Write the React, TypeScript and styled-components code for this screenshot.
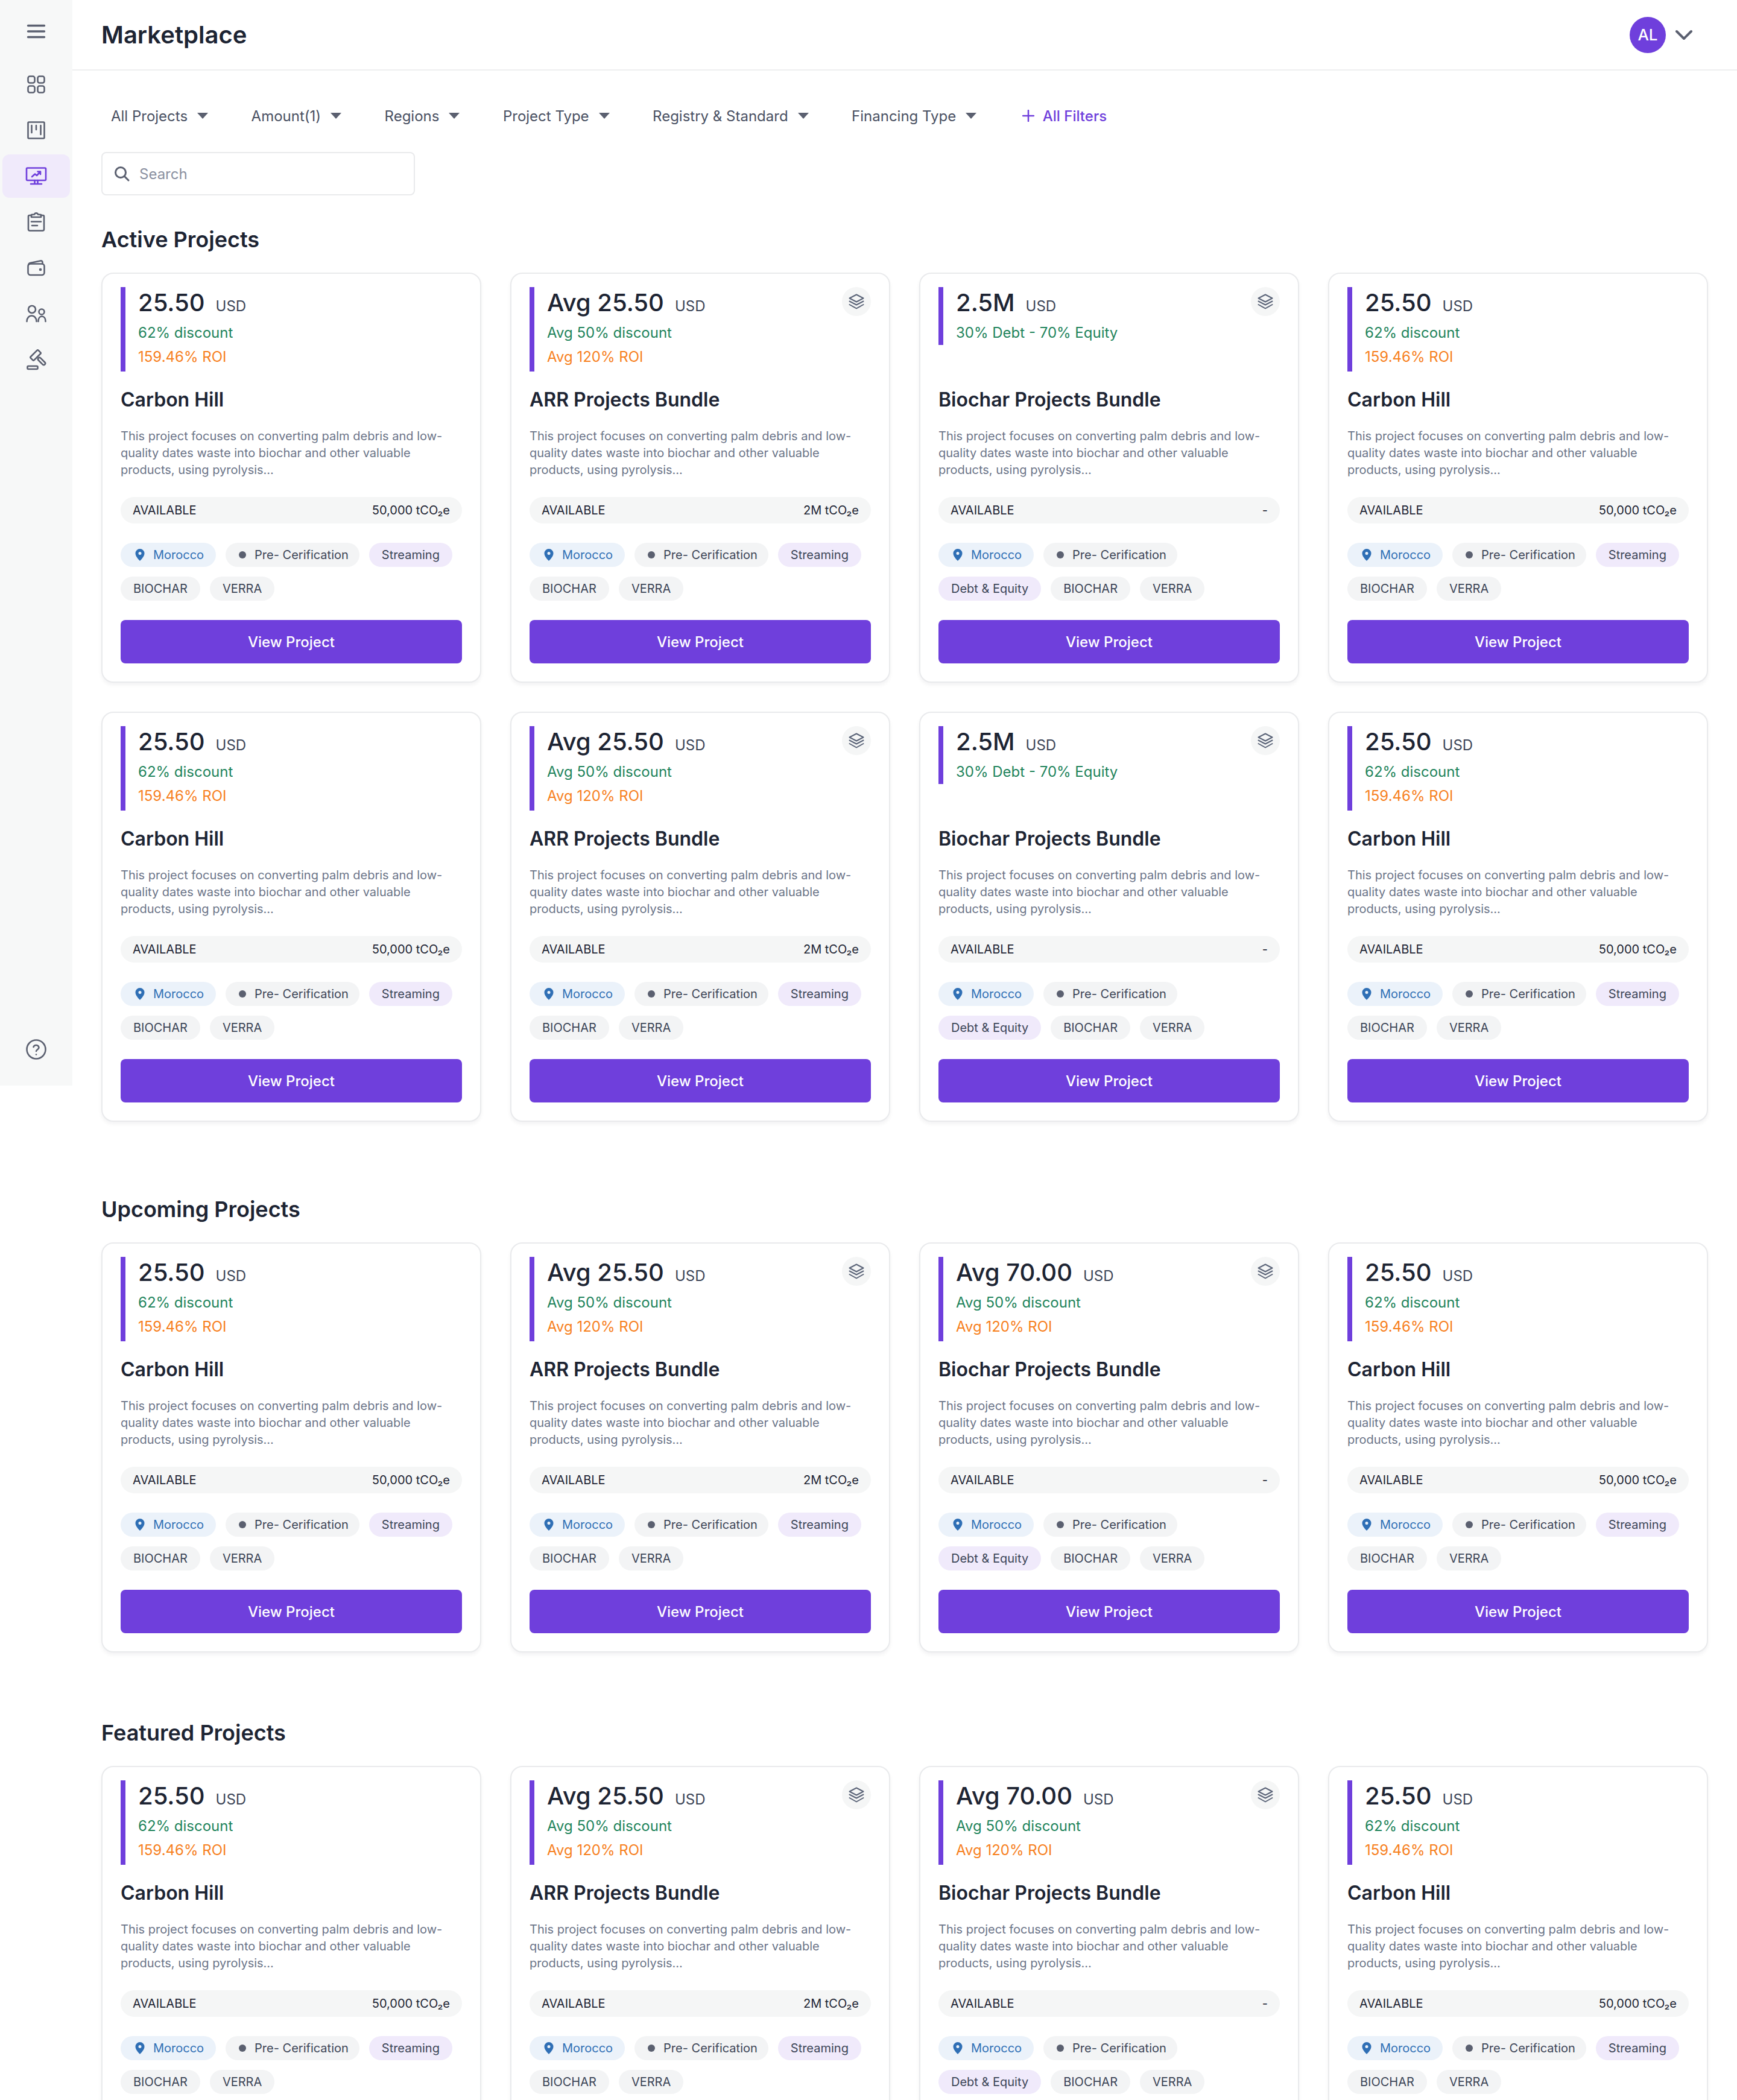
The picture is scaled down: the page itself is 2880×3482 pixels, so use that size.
import styled, { createGlobalStyle } from "styled-components";

const GlobalStyle = createGlobalStyle`
  html, body {
    margin: 0;
    padding: 0;
    background: #fff;
    font-family: Inter, "Noto Sans", sans-serif;
    color: #1d2433;
  }
  #root {
    height: 3482px;
    overflow: hidden;
  }
`;

const Page = styled.div`
  display: flex;
  align-items: flex-start;
  width: 2880px;
`;

const Sidebar = styled.nav`
  display: flex;
  flex-direction: column;
  flex: none;
  box-sizing: border-box;
  width: 120px;
  height: 1800px;
  padding: 0 4px 36px;
  background: #f7f8f8;
  color: #5b6070;
`;

const MenuButton = styled.div`
  display: flex;
  align-items: center;
  justify-content: center;
  height: 104px;
`;

const NavList = styled.div`
  display: flex;
  flex-direction: column;
  gap: 4px;
`;

const NavItem = styled.div<{ $active?: boolean }>`
  display: flex;
  align-items: center;
  justify-content: center;
  height: 72px;
  border-radius: 12px;
  background: ${(p) => (p.$active ? "#f0eafb" : "transparent")};
  color: ${(p) => (p.$active ? "#6f3fdc" : "#5b6070")};
`;

const HelpButton = styled.div`
  display: flex;
  align-items: center;
  justify-content: center;
  margin-top: auto;
`;

const Main = styled.main`
  flex: 1;
  min-width: 0;
`;

const Header = styled.header`
  display: flex;
  align-items: center;
  justify-content: space-between;
  box-sizing: border-box;
  height: 117px;
  padding: 0 72px 0 48px;
  border-bottom: 2px solid #eeeff0;
`;

const PageTitle = styled.h1`
  margin: 0;
  font-size: 40px;
  font-weight: 600;
  color: #1d2433;
`;

const UserMenu = styled.div`
  display: flex;
  align-items: center;
  gap: 14px;
  color: #5b6070;
`;

const Avatar = styled.div`
  display: flex;
  align-items: center;
  justify-content: center;
  width: 60px;
  height: 60px;
  border-radius: 50%;
  background: #6f3fdc;
  color: #fff;
  font-size: 26px;
  font-weight: 500;
`;

const Content = styled.div`
  padding: 0 48px;
`;

const Filters = styled.div`
  display: flex;
  align-items: center;
  gap: 71.5px;
  height: 48px;
  margin-top: 51px;
  padding-left: 16px;
`;

const Filter = styled.div`
  display: flex;
  align-items: center;
  gap: 16px;
  font-size: 24px;
  color: #4a5163;
  white-space: nowrap;
`;

const Caret = styled.span`
  width: 0;
  height: 0;
  border-left: 9px solid transparent;
  border-right: 9px solid transparent;
  border-top: 10px solid #5b6070;
`;

const AllFilters = styled.div`
  display: flex;
  align-items: center;
  gap: 14px;
  margin-left: 4px;
  font-size: 24px;
  font-weight: 500;
  color: #6f3fdc;
`;

const Search = styled.div`
  display: flex;
  align-items: center;
  gap: 15px;
  box-sizing: border-box;
  width: 520px;
  height: 72px;
  margin-top: 36px;
  padding: 0 18px;
  border: 2px solid #e9eaec;
  border-radius: 8px;
  color: #5b6070;
  font-size: 24px;
`;

const SearchHint = styled.span`
  color: #8a90a0;
`;

const Section = styled.section<{ $top: number }>`
  margin-top: ${(p) => p.$top}px;
`;

const SectionTitle = styled.h2`
  margin: 0 0 31px;
  font-size: 36px;
  line-height: 48px;
  font-weight: 600;
  color: #1d2433;
`;

const CardGrid = styled.div`
  display: grid;
  grid-template-columns: repeat(4, 630px);
  gap: 48px;
`;

const Card = styled.article`
  position: relative;
  box-sizing: border-box;
  height: 680px;
  padding: 22px 30px 30px;
  border: 2px solid #e9eaec;
  border-radius: 20px;
  background: #fff;
  box-shadow: 0 4px 6px rgba(16, 24, 40, 0.05);
`;

const PriceArea = styled.div`
  height: 140px;
`;

const PriceBar = styled.div`
  border-left: 8px solid #6f3fdc;
  padding-left: 21px;
`;

const PriceRow = styled.div`
  display: flex;
  align-items: baseline;
  gap: 18px;
  height: 56px;
  line-height: 52px;
`;

const Price = styled.span`
  font-size: 40px;
  font-weight: 500;
  color: #1d2433;
`;

const Currency = styled.span`
  font-size: 24px;
  color: #3c4557;
`;

const Discount = styled.div`
  font-size: 24px;
  line-height: 40px;
  color: #22845c;
`;

const Roi = styled.div`
  padding-bottom: 4px;
  font-size: 24px;
  line-height: 40px;
  color: #f7801e;
`;

const BundleBadge = styled.div`
  position: absolute;
  top: 22px;
  right: 30px;
  display: flex;
  align-items: center;
  justify-content: center;
  width: 48px;
  height: 48px;
  border-radius: 50%;
  background: #f5f6f6;
  color: #5b6478;
`;

const CardTitle = styled.h3`
  margin: 25px 0 0;
  font-size: 32px;
  line-height: 44px;
  font-weight: 600;
  color: #1d2433;
`;

const Description = styled.p`
  margin: 24px 0 0;
  font-size: 20px;
  line-height: 28px;
  color: #6b7488;
`;

const Availability = styled.div`
  display: flex;
  align-items: center;
  justify-content: space-between;
  height: 44px;
  margin-top: 31px;
  padding: 0 20px;
  border-radius: 22px;
  background: #f5f6f6;
  font-size: 20px;
  color: #1d2433;
`;

const TagList = styled.div`
  display: flex;
  flex-wrap: wrap;
  gap: 16px;
  height: 96px;
  margin-top: 32px;
`;

const Tag = styled.span<{ $tone?: "blue" | "purple" | "grey" }>`
  display: inline-flex;
  align-items: center;
  gap: 14px;
  box-sizing: border-box;
  height: 40px;
  padding: 0 21px;
  border-radius: 20px;
  font-size: 20px;
  white-space: nowrap;
  background: ${(p) =>
    p.$tone === "blue" ? "#ebf2fa" : p.$tone === "purple" ? "#f0eafb" : "#f3f4f5"};
  color: ${(p) => (p.$tone === "blue" ? "#2f6fb5" : "#3c4557")};
`;

const LocationTag = styled(Tag)`
  padding: 0 20px 0 24px;
`;

const StatusTag = styled(Tag)`
  padding: 0 18px 0 22px;
`;

const Dot = styled.span`
  width: 12px;
  height: 12px;
  border-radius: 50%;
  background: #5b6070;
`;

const ViewButton = styled.button`
  display: block;
  width: 100%;
  height: 72px;
  margin-top: 32px;
  border: none;
  border-radius: 8px;
  background: #6f3fdc;
  color: #fff;
  font-family: inherit;
  font-size: 24px;
  font-weight: 500;
`;

const NavIcon = ({ children }: { children: React.ReactNode }) => (
  <svg
    width="48"
    height="48"
    viewBox="0 0 48 48"
    fill="none"
    stroke="currentColor"
    strokeWidth="2.6"
    strokeLinecap="round"
    strokeLinejoin="round"
  >
    {children}
  </svg>
);

const navIcons = [
  <>
    <rect x="10.5" y="10.5" width="11" height="11" rx="3" />
    <rect x="26.5" y="10.5" width="11" height="11" rx="3" />
    <rect x="10.5" y="26.5" width="11" height="11" rx="3" />
    <rect x="26.5" y="26.5" width="11" height="11" rx="3" />
  </>,
  <>
    <rect x="10.5" y="10.5" width="27" height="27" rx="1.5" />
    <path d="M16.5 16v12M24 16v7M31.5 16v15" />
  </>,
  <>
    <rect x="8" y="10.5" width="32" height="20.5" rx="1.5" />
    <path d="M21.5 31v5M26.5 31v5M15 37h18" />
    <path d="M17 25l5-4.5 3 2.5 6-6.5M26.5 16.5H31V21" />
  </>,
  <>
    <path d="M16 13h-3a2 2 0 0 0-2 2v21a2.5 2.5 0 0 0 2.5 2.5h21a2.5 2.5 0 0 0 2.5-2.5V15a2 2 0 0 0-2-2h-3" />
    <path d="M16 16v-4l5-.5c1-2.8 5-2.8 6 0l5 .5v4z" />
    <path d="M16 23.5h16M17 30h9" />
  </>,
  <>
    <rect x="10.5" y="17.5" width="27" height="18.5" rx="4" />
    <path d="M11 19.5c.5-2 1.5-3 3-3.4L31 12.5c2-.4 3.5.6 3.5 2.5v2.5" />
    <circle cx="31" cy="27" r="1" />
  </>,
  <>
    <circle cx="17" cy="17" r="6" />
    <circle cx="33" cy="21" r="4.5" />
    <path d="M8.5 37c0-5.5 3.5-9.5 8-9.5s8 4 8 9.5" />
    <path d="M27.5 37c0-5 2.5-8.5 6-8.5s6 3.5 6 8.5" />
  </>,
  <>
    <rect x="14" y="13" width="18" height="8" rx="1.5" transform="rotate(-45 23 17)" />
    <rect x="25.5" y="24.5" width="15" height="5" rx="2.5" transform="rotate(45 33 27)" />
    <rect x="9.5" y="35" width="17" height="5" rx="1.5" />
  </>,
];

const LayersIcon = () => (
  <svg
    width="28"
    height="28"
    viewBox="0 0 28 28"
    fill="none"
    stroke="currentColor"
    strokeWidth="2"
    strokeLinecap="round"
    strokeLinejoin="round"
  >
    <path d="M14 2.5L25.5 8.5 14 14.5 2.5 8.5z" />
    <path d="M2.5 13.5L14 19.5l11.5-6" />
    <path d="M2.5 19L14 25.5 25.5 19" />
  </svg>
);

const PinIcon = () => (
  <svg width="16" height="20" viewBox="0 0 16 20">
    <path
      fill="#2f6fb5"
      fillRule="evenodd"
      d="M8 0a7.5 7.5 0 0 1 7.5 7.5C15.5 12 11 17 8 20 5 17 .5 12 .5 7.5A7.5 7.5 0 0 1 8 0zm0 5a2.5 2.5 0 1 0 0 5 2.5 2.5 0 0 0 0-5z"
    />
  </svg>
);

type Project = {
  price: string;
  discount: string;
  roi?: string;
  title: string;
  amount: string;
  bundle?: boolean;
  finance: string;
};

const carbon: Project = {
  price: "25.50",
  discount: "62% discount",
  roi: "159.46% ROI",
  title: "Carbon Hill",
  amount: "50,000 tCO₂e",
  finance: "Streaming",
};
const arr: Project = {
  price: "Avg 25.50",
  discount: "Avg 50% discount",
  roi: "Avg 120% ROI",
  title: "ARR Projects Bundle",
  amount: "2M tCO₂e",
  bundle: true,
  finance: "Streaming",
};
const biochar: Project = {
  price: "2.5M",
  discount: "30% Debt - 70% Equity",
  title: "Biochar Projects Bundle",
  amount: "-",
  bundle: true,
  finance: "Debt & Equity",
};
const biocharAvg: Project = {
  ...biochar,
  price: "Avg 70.00",
  discount: "Avg 50% discount",
  roi: "Avg 120% ROI",
};

const sections = [
  {
    title: "Active Projects",
    top: 49,
    projects: [carbon, arr, biochar, carbon, carbon, arr, biochar, carbon],
  },
  {
    title: "Upcoming Projects",
    top: 121,
    projects: [carbon, arr, biocharAvg, carbon],
  },
  {
    title: "Featured Projects",
    top: 109,
    projects: [carbon, arr, biocharAvg, carbon],
  },
];

const filters = [
  "All Projects",
  "Amount(1)",
  "Regions",
  "Project Type",
  "Registry & Standard",
  "Financing Type",
];

const ProjectCard = ({ project }: { project: Project }) => (
  <Card>
    <PriceArea>
      <PriceBar>
        <PriceRow>
          <Price>{project.price}</Price>
          <Currency>USD</Currency>
        </PriceRow>
        <Discount>{project.discount}</Discount>
        {project.roi && <Roi>{project.roi}</Roi>}
      </PriceBar>
    </PriceArea>
    {project.bundle && (
      <BundleBadge>
        <LayersIcon />
      </BundleBadge>
    )}
    <CardTitle>{project.title}</CardTitle>
    <Description>
      This project focuses on converting palm debris and low-quality dates waste
      into biochar and other valuable products, using pyrolysis...
    </Description>
    <Availability>
      <span>AVAILABLE</span>
      <span>{project.amount}</span>
    </Availability>
    <TagList>
      <LocationTag $tone="blue">
        <PinIcon />
        Morocco
      </LocationTag>
      <StatusTag>
        <Dot />
        Pre- Cerification
      </StatusTag>
      <Tag $tone="purple">{project.finance}</Tag>
      <Tag>BIOCHAR</Tag>
      <Tag>VERRA</Tag>
    </TagList>
    <ViewButton>View Project</ViewButton>
  </Card>
);

const App = () => (
  <Page>
    <GlobalStyle />
    <Sidebar>
      <MenuButton>
        <svg width="48" height="48" viewBox="0 0 48 48" fill="none" stroke="currentColor" strokeWidth="3.4" strokeLinecap="round">
          <path d="M10.5 14.5h27M10.5 24h27M10.5 33.5h27" />
        </svg>
      </MenuButton>
      <NavList>
        {navIcons.map((icon, i) => (
          <NavItem key={i} $active={i === 2}>
            <NavIcon>{icon}</NavIcon>
          </NavItem>
        ))}
      </NavList>
      <HelpButton>
        <svg width="48" height="48" viewBox="0 0 48 48" fill="none" stroke="currentColor" strokeWidth="2.6" strokeLinecap="round" strokeLinejoin="round">
          <circle cx="24" cy="24" r="15.5" />
          <path d="M19.5 20a4.7 4.7 0 0 1 9 1c0 3-4.5 3.5-4.5 6" />
          <path d="M24 32.5h.02" />
        </svg>
      </HelpButton>
    </Sidebar>
    <Main>
      <Header>
        <PageTitle>Marketplace</PageTitle>
        <UserMenu>
          <Avatar>AL</Avatar>
          <svg width="32" height="20" viewBox="0 0 32 20" fill="none" stroke="currentColor" strokeWidth="4" strokeLinecap="round" strokeLinejoin="round">
            <path d="M4 4l12 12L28 4" />
          </svg>
        </UserMenu>
      </Header>
      <Content>
        <Filters>
          {filters.map((f) => (
            <Filter key={f}>
              {f}
              <Caret />
            </Filter>
          ))}
          <AllFilters>
            <svg width="20" height="20" viewBox="0 0 20 20" fill="none" stroke="currentColor" strokeWidth="2.5" strokeLinecap="round">
              <path d="M10 1v18M1 10h18" />
            </svg>
            All Filters
          </AllFilters>
        </Filters>
        <Search>
          <svg width="28" height="28" viewBox="0 0 28 28" fill="none" stroke="currentColor" strokeWidth="3" strokeLinecap="round">
            <circle cx="12" cy="12" r="8.5" />
            <path d="M18.5 18.5L25 25" />
          </svg>
          <SearchHint>Search</SearchHint>
        </Search>
        {sections.map((s) => (
          <Section key={s.title} $top={s.top}>
            <SectionTitle>{s.title}</SectionTitle>
            <CardGrid>
              {s.projects.map((p, i) => (
                <ProjectCard key={i} project={p} />
              ))}
            </CardGrid>
          </Section>
        ))}
      </Content>
    </Main>
  </Page>
);

export default App;
